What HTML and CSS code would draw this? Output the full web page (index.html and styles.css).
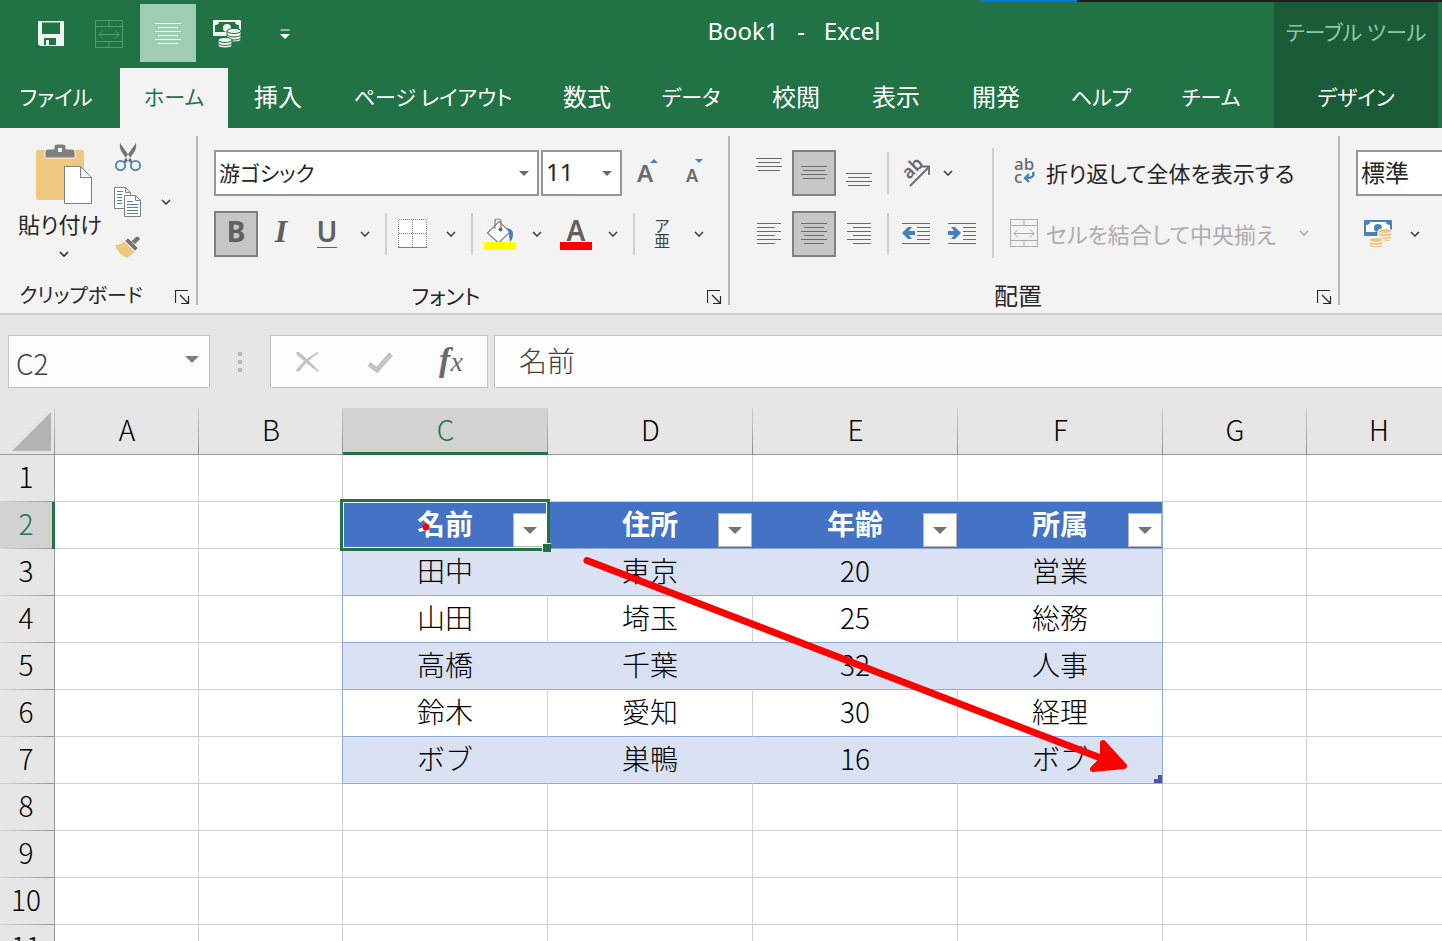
FILE: index.html
```html
<!DOCTYPE html>
<html lang="ja">
<head>
<meta charset="utf-8">
<title>Book1 - Excel</title>
<link rel="stylesheet" href="styles.css">
</head>
<body>
<svg class="symbols" aria-hidden="true">
  <symbol id="chevron" viewBox="0 0 10 6"><path d="M1 1l4 4 4-4" fill="none" stroke="currentColor" stroke-width="1.6"/></symbol>
  <symbol id="triangle" viewBox="0 0 10 5"><path d="M0 0h10L5 5z" fill="currentColor"/></symbol>
  <symbol id="launcher" viewBox="0 0 15 15"><path d="M.5 13V.5H13M5 5l8 8M13.500 6v7.500H6" fill="none" stroke="#262626" stroke-width="1.200"/></symbol>
  <symbol id="merge" viewBox="0 0 28 28"><path d="M.5.500h27v27H.5zM.5 6.500h27M.5 21.500h27M14 .5v6M14 21.500v6M4 14.500h20M8 10.500l-4 4 4 4M20 10.500l4 4-4 4" fill="none" stroke="currentColor"/></symbol>
  <symbol id="center" viewBox="0 0 26 22"><path d="M0 .5h26M3 4.500h20M0 8.500h26M3 12.500h20M0 16.500h26M3 20.500h20" stroke="currentColor"/></symbol>
  <symbol id="lines4" viewBox="0 0 26 14"><path d="M0 .5h26M2 4.500h22M0 8.500h26M2 12.500h22" stroke="currentColor"/></symbol>
  <symbol id="money" viewBox="0 0 28 28">
    <rect class="note" width="28" height="16" rx="1"/>
    <path class="paper" d="M6 2h16q0 3 4 3v7H2V5q4 0 4-3z"/>
    <circle class="note" cx="14" cy="8" r="4"/>
    <g class="coins"><path d="M14 11v8q0 3 7 3t7-3v-8z"/><ellipse cx="21" cy="11" rx="7" ry="2.500"/><path d="M14 15q2 2 7 2t7-2M14 18q2 2 7 2t7-2" fill="none"/>
    <path d="M5 20v5q0 3 7 3t7-3v-5z"/><ellipse cx="12" cy="20" rx="7" ry="2.500"/><path d="M5 23.500q2 2 7 2t7-2" fill="none"/></g>
  </symbol>
</svg>

<header class="app-header">
  <div class="edge-strip"></div>
  <div class="main-header">
    <div class="title-bar">
      <div class="quick-access">
        <button class="quick" aria-label="上書き保存"><svg width="26" height="26" viewBox="0 0 26 26"><path d="M1 0h24q1 0 1 1v24H2l-2-2V1q0-1 1-1z" fill="#f3f3f3"/><path d="M4 1.500h18V13H4zM6 17h12v7h-7v-5h-3v5H6z" fill="#217346"/></svg></button>
        <button class="quick faded" aria-label="セルを結合して中央揃え"><svg width="28" height="28"><use href="#merge"/></svg></button>
        <button class="quick lit" aria-label="中央揃え"><svg width="26" height="22"><use href="#center"/></svg></button>
        <button class="quick money-white" aria-label="通貨"><svg width="28" height="28"><use href="#money"/></svg></button>
        <button class="quick" aria-label="カスタマイズ"><svg width="10" height="10" viewBox="0 0 10 10"><path d="M.500.500h9v1h-9zM0 5h10L5 10z" fill="#fff"/></svg></button>
      </div>
      <h1 class="title">Book1&nbsp;&nbsp; -&nbsp;&nbsp; Excel</h1>
    </div>
    <nav class="tabs">
      <button class="tab kana file">ファイル</button><button class="tab kana active">ホーム</button><button class="tab">挿入</button><button class="tab kana">ページ レイアウト</button><button class="tab">数式</button><button class="tab kana">データ</button><button class="tab">校閲</button><button class="tab">表示</button><button class="tab">開発</button><button class="tab kana">ヘルプ</button><button class="tab kana">チーム</button>
    </nav>
  </div>
  <div class="context-header">
    <div class="context-title kana">テーブル ツール</div>
    <button class="tab kana">デザイン</button>
  </div>
</header>

<section class="ribbon">
  <div class="group clipboard">
    <div class="group-body">
      <button class="paste"><svg width="56" height="60" viewBox="0 0 56 60"><rect y="6" width="48" height="50" rx="2" fill="#edc87e"/><path d="M9 14V8q0-3 3-3h6V3q0-3 3-3h6q3 0 3 3v2h6q3 0 3 3v6z" fill="#7f7f7f" stroke="#f3f3f3"/><rect x="22" y="4" width="4" height="4" fill="#f3f3f3"/><path d="M28.500 22.500h16l11 11v26h-27z" fill="#fff" stroke="#7f7f7f"/><path d="M44.500 22.500v11h11" fill="none" stroke="#7f7f7f"/></svg><span>貼り付け</span><svg class="chev" width="10" height="6"><use href="#chevron"/></svg></button>
      <div class="clip-tools">
        <button class="tool" aria-label="切り取り"><svg width="26" height="28" viewBox="0 0 26 28"><path d="M5 0q-1 6 3 11l7 9 2.500-1.500-4-6.500zM21 0q1 6-3 11l-7 9-2.500-1.500 4-6.500z" fill="#737373"/><g fill="#f3f3f3" stroke="#4a80b8" stroke-width="1.800"><circle cx="5.500" cy="22.500" r="4.600"/><circle cx="20.500" cy="22.500" r="4.600"/></g></svg></button><span></span>
        <button class="tool" aria-label="コピー"><svg width="28" height="30" viewBox="0 0 28 30"><g fill="#fff" stroke="#7f7f7f"><path d="M.500.500h11l5 5v16h-16zM11.500.500v5h5"/><path d="M10.500 8.500h11l5 5v16h-16zM21.500 8.500v5h5"/></g><path d="M3 4.500h6M3 7.500h5M3 10.500h5M3 13.500h5M3 16.500h5M13 14.500h6M13 17.500h11M13 20.500h11M13 23.500h11M13 26.500h11" stroke="#4a80b8"/></svg></button>
        <button class="tool" aria-label="コピーのオプション"><svg width="10" height="6"><use href="#chevron"/></svg></button>
        <button class="tool" aria-label="書式のコピー"><svg width="26" height="22" viewBox="0 0 26 22"><path d="M0 9q6 0 9-4l11 11q-4 2-8 6Q3 18 0 9z" fill="#edc87e"/><path d="M10 5l3-3 10 10-3 3z" fill="#737373" stroke="#f3f3f3" stroke-width=".6"/><path d="M16 5l2-1 3-3q3-1 4 2l-5 5z" fill="#737373"/></svg></button><span></span>
      </div>
    </div>
    <footer class="group-label"><span>クリップボード</span><button class="launch" aria-label="クリップボードの設定"><svg width="15" height="15"><use href="#launcher"/></svg></button></footer>
  </div>

  <div class="group font">
    <div class="group-body rows">
      <div class="row">
        <label class="combo family"><select class="kana" aria-label="フォント"><option>游ゴシック</option></select><svg width="10" height="5"><use href="#triangle"/></svg></label>
        <label class="combo size"><select aria-label="フォント サイズ"><option>11</option></select><svg width="10" height="5"><use href="#triangle"/></svg></label>
        <button class="tool grow" aria-label="フォント サイズの拡大"><span>A</span><svg width="8" height="4" viewBox="0 0 8 4"><path d="M0 4h8L4 0z" fill="#4a80b8"/></svg></button>
        <button class="tool shrink" aria-label="フォント サイズの縮小"><span>A</span><svg width="8" height="4" viewBox="0 0 8 4"><path d="M0 0h8L4 4z" fill="#4a80b8"/></svg></button>
      </div>
      <div class="row font-tools">
        <button class="tool glyph pressed">B</button>
        <button class="tool glyph italic">I</button>
        <button class="tool glyph"><span class="under">U</span></button>
        <button class="tool" aria-label="下線の種類"><svg width="10" height="6"><use href="#chevron"/></svg></button>
        <i class="sep"></i>
        <button class="tool" aria-label="罫線"><svg width="30" height="30" viewBox="0 0 30 30"><rect x="1" y="1" width="28" height="28" fill="#fff"/><path d="M1 .5h28M1 14.500h28M.5 1v28M14.500 1v28M28.500 1v28" stroke="#7f7f7f" stroke-dasharray="1 1"/><path d="M0 28.500h29" stroke="#7f7f7f"/></svg></button>
        <button class="tool" aria-label="罫線の種類"><svg width="10" height="6"><use href="#chevron"/></svg></button>
        <i class="sep"></i>
        <button class="tool" aria-label="塗りつぶしの色"><svg width="32" height="32" viewBox="0 0 32 32"><path d="M3.500 15L15 3.500 26 14 14.500 25z" fill="#fff" stroke="#7f7f7f" stroke-width="1.200"/><path d="M11 11V3q0-2 3-2t3 2v8" fill="none" stroke="#7f7f7f" stroke-width="1.200"/><circle cx="16.500" cy="11.500" r="2" fill="#6a6a6a"/><path d="M23 10q6 1 6 6 0 5-3 8-1-5-1-9z" fill="#4a80b8"/><path d="M0 24h32v8H0z" fill="#ff0"/></svg></button>
        <button class="tool" aria-label="塗りつぶしの色の選択"><svg width="10" height="6"><use href="#chevron"/></svg></button>
        <button class="tool glyph font-color"><span>A</span></button>
        <button class="tool" aria-label="フォントの色の選択"><svg width="10" height="6"><use href="#chevron"/></svg></button>
        <i class="sep"></i>
        <button class="tool ruby"><span>ア</span><span>亜</span></button>
        <button class="tool" aria-label="ふりがなのオプション"><svg width="10" height="6"><use href="#chevron"/></svg></button>
      </div>
    </div>
    <footer class="group-label"><span>フォント</span><button class="launch" aria-label="フォントの設定"><svg width="15" height="15"><use href="#launcher"/></svg></button></footer>
  </div>

  <div class="group align">
    <div class="group-body">
      <div class="align-grid">
        <button class="tool top" aria-label="上揃え"><svg width="26" height="14"><use href="#lines4"/></svg></button>
        <button class="tool pressed" aria-label="上下中央揃え"><svg width="26" height="14"><use href="#lines4"/></svg></button>
        <button class="tool bottom" aria-label="下揃え"><svg width="26" height="14"><use href="#lines4"/></svg></button>
        <i class="sep"></i>
        <button class="tool" aria-label="方向"><svg class="spill" width="30" height="28" viewBox="0 0 30 28"><text class="tilt" x="8" y="21" transform="rotate(-45 8 21)">ab</text><path d="M9 27L28 8M19.500 7.500H28V16" fill="none" stroke="#6a6a6a" stroke-width="1.800"/></svg></button>
        <button class="tool" aria-label="方向のオプション"><svg width="10" height="6"><use href="#chevron"/></svg></button>
        <button class="tool" aria-label="左揃え"><svg width="24" height="22" viewBox="0 0 24 22"><path d="M0 .5h24M0 4.500h18M0 8.500h24M0 12.500h18M0 16.500h24M0 20.500h18" stroke="#6a6a6a"/></svg></button>
        <button class="tool pressed" aria-label="中央揃え"><svg width="26" height="22"><use href="#center"/></svg></button>
        <button class="tool" aria-label="右揃え"><svg width="24" height="22" viewBox="0 0 24 22"><path d="M0 .5h24M6 4.500h18M0 8.500h24M6 12.500h18M0 16.500h24M6 20.500h18" stroke="#6a6a6a"/></svg></button>
        <i class="sep"></i>
        <button class="tool" aria-label="インデントを減らす"><svg width="28" height="22" viewBox="0 0 28 22"><path d="M0 .5h28M15 4.500h13M15 8.500h13M15 12.500h13M15 16.500h13M0 20.500h28" stroke="#6a6a6a"/><path d="M0 10l6-6h4L7 8h6v4H7l3 4H6z" fill="#4a80b8"/></svg></button>
        <button class="tool" aria-label="インデントを増やす"><svg width="28" height="22" viewBox="0 0 28 22"><path d="M0 .5h28M15 4.500h13M15 8.500h13M15 12.500h13M15 16.500h13M0 20.500h28" stroke="#6a6a6a"/><path d="M13 10L7 4H3l3 4H0v4h6l-3 4h4z" fill="#4a80b8"/></svg></button>
      </div>
      <i class="tall-sep"></i>
      <div class="wrap-tools">
        <button class="wide"><svg class="spill" width="28" height="28" viewBox="0 0 28 28"><text class="wrap-ab" x="4" y="12">ab</text><text class="wrap-ab" x="4" y="25">c</text><path d="M23 14q2 6-6 6M19 16l-4 4 4 4" fill="none" stroke="#4a80b8" stroke-width="2.400"/></svg><span>折り返して全体を表示する</span></button>
        <button class="wide off" disabled><svg width="28" height="28"><use href="#merge"/></svg><span>セルを結合して中央揃え</span><svg class="end" width="10" height="6"><use href="#chevron"/></svg></button>
      </div>
    </div>
    <footer class="group-label kanji"><span>配置</span><button class="launch" aria-label="配置の設定"><svg width="15" height="15"><use href="#launcher"/></svg></button></footer>
  </div>

  <div class="group number">
    <div class="group-body rows">
      <div class="row"><label class="combo format"><select aria-label="表示形式"><option>標準</option></select></label></div>
      <div class="row number-tools">
        <button class="tool money-color" aria-label="通貨表示形式"><svg width="28" height="28"><use href="#money"/></svg></button>
        <button class="tool" aria-label="通貨の選択"><svg width="10" height="6"><use href="#chevron"/></svg></button>
      </div>
    </div>
  </div>
</section>

<section class="formula-bar">
  <div class="name-box"><input aria-label="名前ボックス" value="C2"><button aria-label="名前の一覧"><svg width="14" height="7"><use href="#triangle"/></svg></button></div>
  <svg class="grip" width="4" height="20" viewBox="0 0 4 20"><path d="M0 0h4v4H0zM0 8h4v4H0zM0 16h4v4H0z" fill="#b5b5b5"/></svg>
  <div class="fx-box">
    <button aria-label="キャンセル"><svg width="24" height="22" viewBox="0 0 24 22"><path d="M3 1Q13 9 23 20l-1 1Q12 14 1 4-1 0 3 1z" fill="#c3c3c3"/><path d="M23 2Q11 9 4 20q-3 2-4-1Q8 8 22 1z" fill="#c3c3c3"/></svg></button>
    <button aria-label="入力"><svg width="26" height="22" viewBox="0 0 26 22"><path d="M2 13l8 6L24 3" fill="none" stroke="#c3c3c3" stroke-width="5"/></svg></button>
    <button class="fx" aria-label="関数の挿入"><span>f</span><span class="x">x</span></button>
  </div>
  <input class="formula" aria-label="数式バー" value="名前">
</section>

<main class="sheet">
  <table class="grid">
    <colgroup><col class="c-head"><col class="c-std"><col class="c-std"><col class="c-wide"><col class="c-wide"><col class="c-wide"><col class="c-wide"><col class="c-std"><col class="c-std"></colgroup>
    <thead><tr><th class="corner"><svg width="39" height="39" viewBox="0 0 39 39"><path d="M39 0v39H0z" fill="#b3b3b3"/></svg></th><th>A</th><th>B</th><th class="current">C</th><th>D</th><th>E</th><th>F</th><th>G</th><th>H</th></tr></thead>
    <tbody>
      <tr><th>1</th><td></td><td></td><td></td><td></td><td></td><td></td><td></td><td></td></tr>
      <tr class="titles"><th class="current">2</th><td></td><td class="edge"></td>
        <td class="t">名前<button class="filter" aria-label="名前で絞り込み"><svg width="14" height="7"><use href="#triangle"/></svg></button><span class="selection"></span></td>
        <td class="t">住所<button class="filter" aria-label="住所で絞り込み"><svg width="14" height="7"><use href="#triangle"/></svg></button></td>
        <td class="t">年齢<button class="filter" aria-label="年齢で絞り込み"><svg width="14" height="7"><use href="#triangle"/></svg></button></td>
        <td class="t last">所属<button class="filter" aria-label="所属で絞り込み"><svg width="14" height="7"><use href="#triangle"/></svg></button></td><td></td><td></td></tr>
      <tr class="band"><th>3</th><td></td><td class="edge"></td><td class="t">田中</td><td class="t">東京</td><td class="t">20</td><td class="t last">営業</td><td></td><td></td></tr>
      <tr><th>4</th><td></td><td class="edge"></td><td class="t">山田</td><td class="t">埼玉</td><td class="t">25</td><td class="t last">総務</td><td></td><td></td></tr>
      <tr class="band"><th>5</th><td></td><td class="edge"></td><td class="t">高橋</td><td class="t">千葉</td><td class="t">32</td><td class="t last">人事</td><td></td><td></td></tr>
      <tr><th>6</th><td></td><td class="edge"></td><td class="t">鈴木</td><td class="t">愛知</td><td class="t">30</td><td class="t last">経理</td><td></td><td></td></tr>
      <tr class="band"><th>7</th><td></td><td class="edge"></td><td class="t">ボブ</td><td class="t">巣鴨</td><td class="t">16</td><td class="t last">ボブ<svg class="resize" width="8" height="8" viewBox="0 0 8 8"><path d="M4 0h4v8H0V4h4z" fill="#4757a8"/></svg></td><td></td><td></td></tr>
      <tr><th>8</th><td></td><td></td><td></td><td></td><td></td><td></td><td></td><td></td></tr>
      <tr><th>9</th><td></td><td></td><td></td><td></td><td></td><td></td><td></td><td></td></tr>
      <tr><th>10</th><td></td><td></td><td></td><td></td><td></td><td></td><td></td><td></td></tr>
      <tr><th>11</th><td></td><td></td><td></td><td></td><td></td><td></td><td></td><td></td></tr>
    </tbody>
  </table>
  <svg class="arrow" width="1200" height="400" viewBox="0 0 1200 400"><circle cx="426" cy="119" r="3.500" fill="#f00"/><path d="M587 152.500L1106 352" stroke="#f00" stroke-width="7" stroke-linecap="round"/><path d="M1103 335l21 23-31 3 10-10z" fill="#f00" stroke="#f00" stroke-width="6" stroke-linejoin="round"/></svg>
</main>
</body>
</html>
```

FILE: styles.css
```css
* { box-sizing: border-box; }

body {
  margin: 0;
  height: 100vh;
  overflow: hidden;
  display: flex;
  flex-direction: column;
  background: #e6e6e6;
  color: #262626;
  font-family: "Noto Sans", "Noto Sans CJK JP", sans-serif;
  font-size: 24px;
}

button, input, select {
  font: inherit;
  color: inherit;
  border: 0;
  padding: 0;
  margin: 0;
  background: none;
  border-radius: 0;
}

svg { display: block; flex: none; }
.symbols { position: absolute; width: 0; height: 0; }
.spill { overflow: visible; }

/* Title bar and tabs */
.app-header {
  position: relative;
  flex: none;
  display: flex;
  padding-right: 4px;
  background: #217346;
  color: #fff;
}
.edge-strip {
  position: absolute;
  top: 0;
  right: 0;
  width: 461px;
  height: 2px;
  background: linear-gradient(90deg, #0078d7 96px, #1f1f1f 96px);
}
.main-header { flex: 1; }
.title-bar { display: flex; height: 68px; padding: 4px 0 6px 22px; }
.quick-access { display: flex; }
.quick { width: 58px; height: 58px; padding-top: 2px; display: grid; place-items: center; }
.faded { color: #4f9a70; }
.lit { background: #9fcdb3; width: 56px; margin: 0 2px; color: #fff; }
.title { flex: 1; margin: 0; text-align: center; font-size: 24px; font-weight: 400; line-height: 54px; }
.tabs {
  display: grid;
  grid-template-columns: 120px 108px 100px 210px 98px 110px 100px 100px 100px 110px 110px;
}
.tab {
  height: 60px;
  line-height: 54px;
  padding-bottom: 4px;
  white-space: nowrap;
  text-align: center;
  font-feature-settings: "palt";
  font-family: "Noto Sans CJK JP", sans-serif;
  font-weight: 400;
}
.kana { font-size: 21px; }
.file { padding-right: 8px; }
.active { background: #f3f3f3; color: #217346; }
.context-header { width: 164px; margin-top: 2px; background: #1b5c38; display: flex; flex-direction: column; }
.context-title {
  height: 66px;
  line-height: 58px;
  text-align: center;
  color: #8fc7a6;
  font-feature-settings: "palt";
  font-family: "Noto Sans CJK JP", sans-serif;
  white-space: nowrap;
}

.money-white { --note: #f3f3f3; --paper: #217346; --coin: #f3f3f3; --coin-line: #217346; }
.money-color { --note: #4a80b8; --paper: #fff; --coin: #edc87e; --coin-line: #fff; }
.note { fill: var(--note); }
.paper { fill: var(--paper); }
.coins { fill: var(--coin); stroke: var(--coin-line); }

/* Ribbon */
.ribbon {
  flex: none;
  display: flex;
  height: 187px;
  padding-top: 8px;
  background: #f3f3f3;
  border-bottom: 2px solid #d0d0d0;
  overflow: hidden;
  font-family: "Noto Sans CJK JP", sans-serif;
  font-weight: 400;
  font-feature-settings: "palt";
}
.group { flex: none; height: 169px; display: flex; flex-direction: column; border-right: 2px solid #b5b5b5; }
.group-body { flex: 1; display: flex; }
.group-label { position: relative; height: 20px; line-height: 20px; font-size: 20px; text-align: center; }
.launch { position: absolute; right: 6px; bottom: 0; }
.clipboard { width: 198px; }
.font { width: 532px; padding-left: 16px; }
.align { width: 610px; padding-left: 16px; }
.number { flex: 1; border: 0; padding-left: 16px; }
.clipboard .group-label { padding-right: 34px; }
.align .group-label { padding-right: 48px; }
.font .group-label { padding-right: 50px; font-size: 21px; }
.group-label.kanji { font-size: 24px; }

.paste { width: 102px; padding: 8px 0 0 18px; display: flex; flex-direction: column; align-items: center; white-space: nowrap; font-size: 22px; }
.paste > svg:first-child { margin-left: 8px; }
.paste span { line-height: 38px; }
.paste .chev { margin: 9px 0 0 8px; }
.clip-tools { display: grid; grid-template-columns: 52px 24px; grid-template-rows: 42px 48px 42px; align-content: start; }

.tool { display: flex; align-items: center; justify-content: center; color: #404040; }
.rows { flex-direction: column; gap: 15px; padding-top: 14px; }
.row { display: flex; height: 46px; }
.combo { position: relative; display: block; height: 46px; }
.combo select { appearance: none; display: block; width: 100%; height: 100%; padding: 0 0 3px 3px; border: 2px solid #969696; background: #fff; }
.combo svg { position: absolute; right: 10px; top: 21px; color: #6a6a6a; }
.family { width: 325px; margin-right: 2px; }
.size { width: 81px; margin-right: 2px; font-family: "Noto Sans", sans-serif; }
.format { width: 180px; }
.grow, .shrink { width: 47px; align-items: flex-start; color: #6a6a6a; font-family: "Noto Sans", sans-serif; font-weight: 600; }
.grow { font-size: 24px; line-height: 46px; }
.shrink { font-size: 18px; line-height: 50px; }
.grow svg, .shrink svg { margin: 9px 0 0 -3px; }

.font-tools { display: grid; grid-template: 46px / 44px 46px 46px 30px 12px 42px 34px 8px 48px 26px 52px 22px 20px 36px 38px; }
.glyph { font-family: "Noto Sans", sans-serif; font-weight: 700; font-size: 28px; line-height: 36px; color: #606060; padding-bottom: 6px; }
.pressed { background: #c6c6c6; border: 2px solid #808080; color: #6a6a6a; }
.pressed.glyph { color: #606060; }
.italic { font-family: "Liberation Serif", serif; font-style: italic; font-size: 32px; }
.under { font-weight: 600; line-height: 32px; border-bottom: 1px solid #606060; }
.font-color { padding: 0; font-weight: 600; }
.font-color span { width: 32px; height: 32px; line-height: 24px; border-bottom: 8px solid #f00; }
.ruby { flex-direction: column; font-size: 16px; line-height: 15px; padding-bottom: 2px; }
.sep { width: 2px; height: 42px; margin: 2px auto; background: #d0d0d0; }

.align-grid {
  display: grid;
  grid-template: 46px 46px / 46px 44px 46px 12px 44px 48px;
  row-gap: 15px;
  align-content: start;
  padding-top: 14px;
}
.align-grid .tool { color: #6a6a6a; }
.align-grid .tool:nth-child(6) { color: #404040; padding-right: 28px; }
.align-grid .top { padding-bottom: 16px; }
.align-grid .bottom { padding-top: 14px; }
.tilt { font: 600 18px "Noto Sans", sans-serif; fill: #6a6a6a; }
.wrap-ab { font: 500 17px "Noto Sans", sans-serif; fill: #6a6a6a; }
.tall-sep { width: 2px; height: 110px; margin: 12px 16px 0 6px; background: #d0d0d0; }
.wrap-tools { display: flex; flex-direction: column; gap: 15px; padding-top: 14px; font-size: 22px; }
.wide { height: 46px; padding-bottom: 2px; display: flex; align-items: center; gap: 8px; white-space: nowrap; }
.off { color: #b0aab0; }
.end { margin-left: 15px; }
.number-tools { display: grid; grid-template: 46px / 44px 30px; }

/* Formula bar */
.formula-bar {
  flex: none;
  display: flex;
  align-items: center;
  padding: 20px 0 20px 8px;
  height: 93px;
  color: #404040;
  font-family: "Noto Sans CJK JP", sans-serif;
  font-weight: 300;
  font-size: 28px;
}
.name-box, .fx-box, .formula { height: 53px; background: #fdfdfd; border: 1px solid #c3c3c3; }
.name-box { width: 202px; display: flex; padding: 0 10px 0 7px; }
.name-box input { flex: 1; min-width: 0; padding-top: 2px; }
.name-box button { color: #7f7f7f; padding-bottom: 4px; }
.grip { margin: 0 28px; }
.fx-box { width: 218px; display: grid; grid-template-columns: repeat(3, 72px); margin-right: 6px; }
.fx-box button { display: flex; align-items: center; justify-content: center; padding-left: 2px; }
.fx-box .fx { padding: 0 0 4px; font-family: "Liberation Serif", serif; font-style: italic; font-weight: 700; font-size: 34px; color: #6a6a6a; }
.fx .x { font-size: 28px; font-weight: 400; padding-top: 4px; }
.formula { flex: 1; min-width: 0; padding: 0 0 4px 24px; border-right: 0; }

/* Worksheet */
.sheet { position: relative; flex: 1; min-height: 0; overflow: hidden; }
.grid {
  width: 100%;
  min-width: 1451px;
  table-layout: fixed;
  border-collapse: separate;
  border-spacing: 0;
  font-family: "Noto Sans CJK JP", sans-serif;
  font-weight: 300;
  font-size: 28px;
  line-height: 40px;
  color: #000;
}
.c-head { width: 55px; }
.c-std { width: 144px; }
.c-wide { width: 205px; }
.grid th, .grid td { height: 47px; padding: 0 0 4px; text-align: center; white-space: nowrap; }
.grid th { font-weight: 300; }
.grid thead th {
  background: linear-gradient(#cfcfcf, #8f8f8f) right / 1px 100% no-repeat #e6e6e6;
  border-bottom: 1px solid #999;
}
.grid tbody th {
  padding: 0 2px 6px 0;
  background: linear-gradient(90deg, #d5d5d5, #999) bottom / 100% 1px no-repeat #e6e6e6;
  border-right: 1px solid #999;
}
.grid thead .current { padding-bottom: 2px; background-color: #d2d2d2; color: #217346; border-bottom: 3px solid #217346; }
.grid tbody .current { padding-right: 0; background-color: #d2d2d2; color: #217346; border-right: 3px solid #217346; }
.grid thead .corner { padding: 0; }
.corner svg { margin: 0 0 0 12px; }
.grid td { position: relative; background: #fff; border-right: 1px solid #d0d0d0; border-bottom: 1px solid #d0d0d0; }
.grid .edge { border-right-color: #8ea9db; }
.grid .t { border-bottom-color: #8ea9db; }
.grid .band .t { background: #d9e1f2; border-right-color: #d9e1f2; }
.grid .titles .t { background: #4472c4; border-right-color: #4472c4; color: #fff; font-weight: 700; }
.grid .t.last { border-right-color: #8ea9db; }
.filter {
  position: absolute;
  right: 0;
  bottom: 1px;
  width: 34px;
  height: 34px;
  display: grid;
  place-items: center;
  background: #fff;
  border: 1px solid #b5b5b5;
  color: #737373;
}
.selection { position: absolute; inset: -3px; border: 3px solid #217346; box-shadow: inset 0 0 0 1px #fff; z-index: 1; }
.selection::after {
  content: "";
  position: absolute;
  right: -4px;
  bottom: -4px;
  width: 8px;
  height: 8px;
  background: #217346;
  border: solid #fff;
  border-width: 1px 0 0 1px;
}
.resize { position: absolute; right: 0; bottom: 0; }
.arrow { position: absolute; left: 0; top: 0; z-index: 2; pointer-events: none; }
```
